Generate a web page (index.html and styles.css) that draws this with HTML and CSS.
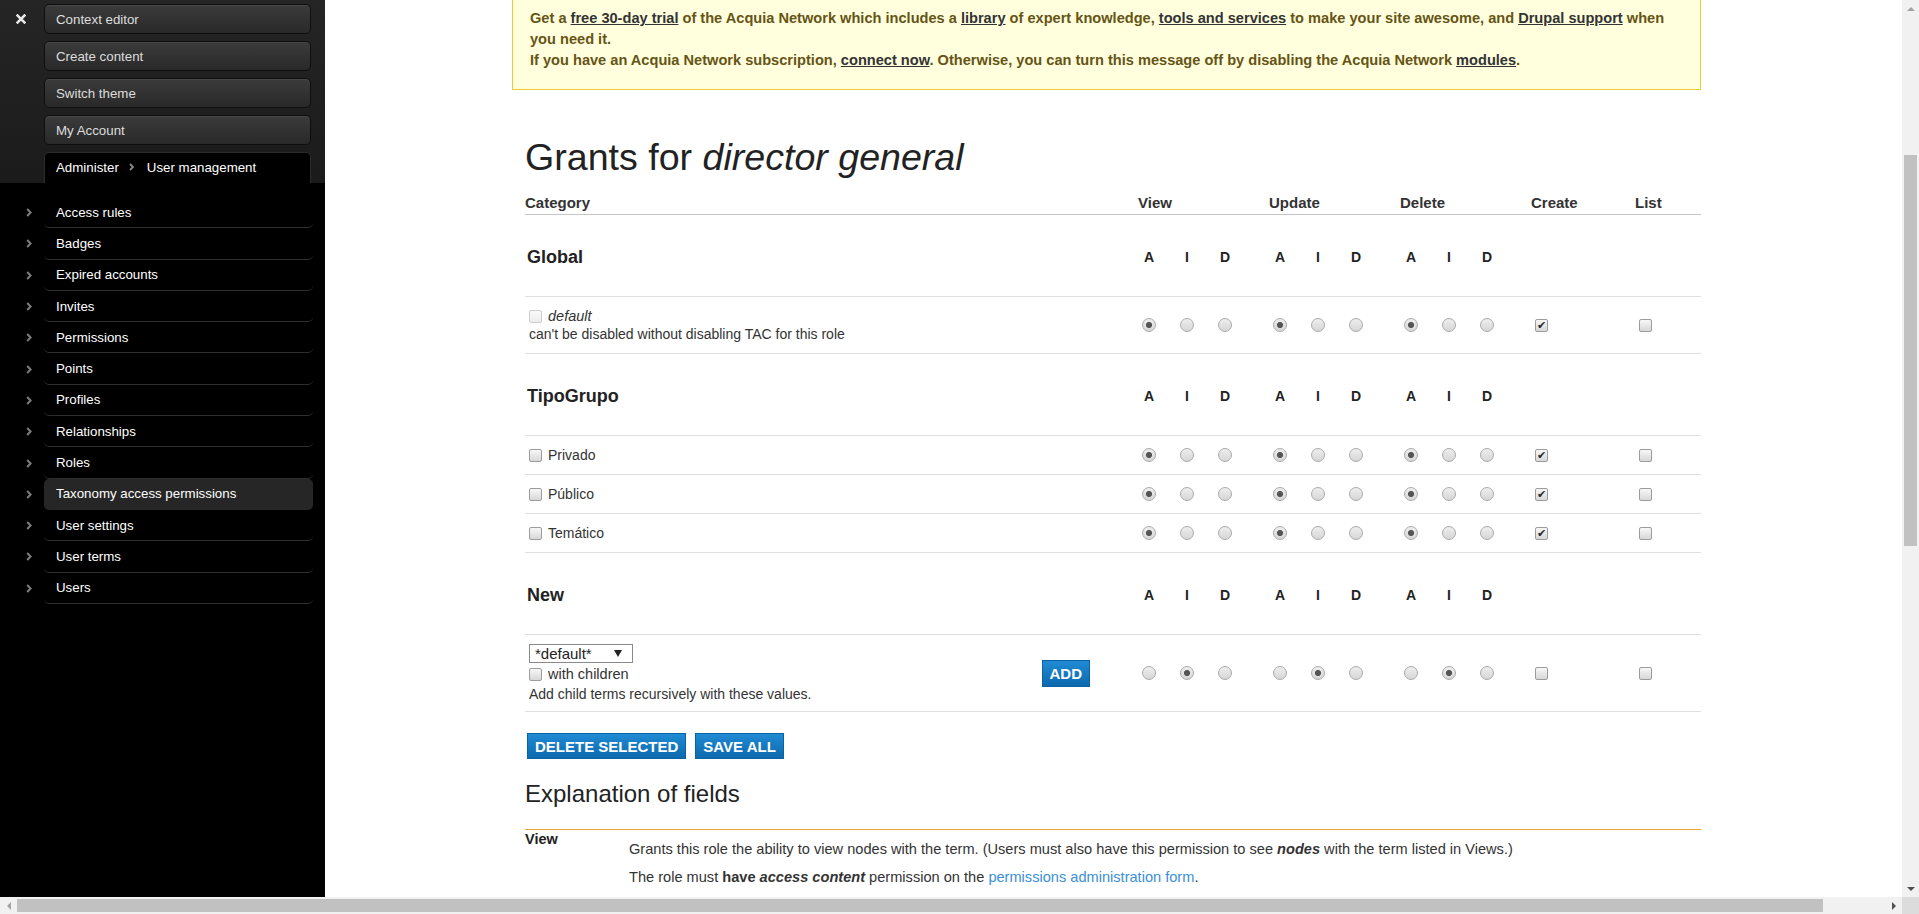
FILE: index.html
```html
<!DOCTYPE html>
<html lang="en">
<head>
<meta charset="utf-8">
<title>Grants for director general</title>
<link rel="stylesheet" href="styles.css">
</head>
<body>
<div class="app">
  <div class="viewport">
    <aside class="sidebar">
      <div class="sb-top">
        <div class="sb-close"><svg width="10" height="10" viewBox="0 0 10 10"><path d="M1.6 1.6 L8.4 8.4 M8.4 1.6 L1.6 8.4" stroke="#e8e8e8" stroke-width="2.6" stroke-linecap="square" fill="none"/></svg></div>
        <nav class="sb-buttons">
          <a class="sb-btn" href="#">Context editor</a>
          <a class="sb-btn" href="#">Create content</a>
          <a class="sb-btn" href="#">Switch theme</a>
          <a class="sb-btn" href="#">My Account</a>
          <div class="sb-tab"><span>Administer</span><svg class="crumb" width="5" height="8" viewBox="0 0 5 8"><path d="M1 1 L4 4 L1 7" fill="none" stroke="#8a8a8a" stroke-width="1.8"/></svg><span>User management</span></div>
        </nav>
      </div>
      <ul class="menu">
        <li><span class="chev"><svg width="6" height="9" viewBox="0 0 6 9"><path d="M1.2 1 L4.6 4.5 L1.2 8" fill="none" stroke="#7c7c7c" stroke-width="2"/></svg></span><a href="#">Access rules</a></li>
        <li><span class="chev"><svg width="6" height="9" viewBox="0 0 6 9"><path d="M1.2 1 L4.6 4.5 L1.2 8" fill="none" stroke="#7c7c7c" stroke-width="2"/></svg></span><a href="#">Badges</a></li>
        <li><span class="chev"><svg width="6" height="9" viewBox="0 0 6 9"><path d="M1.2 1 L4.6 4.5 L1.2 8" fill="none" stroke="#7c7c7c" stroke-width="2"/></svg></span><a href="#">Expired accounts</a></li>
        <li><span class="chev"><svg width="6" height="9" viewBox="0 0 6 9"><path d="M1.2 1 L4.6 4.5 L1.2 8" fill="none" stroke="#7c7c7c" stroke-width="2"/></svg></span><a href="#">Invites</a></li>
        <li><span class="chev"><svg width="6" height="9" viewBox="0 0 6 9"><path d="M1.2 1 L4.6 4.5 L1.2 8" fill="none" stroke="#7c7c7c" stroke-width="2"/></svg></span><a href="#">Permissions</a></li>
        <li><span class="chev"><svg width="6" height="9" viewBox="0 0 6 9"><path d="M1.2 1 L4.6 4.5 L1.2 8" fill="none" stroke="#7c7c7c" stroke-width="2"/></svg></span><a href="#">Points</a></li>
        <li><span class="chev"><svg width="6" height="9" viewBox="0 0 6 9"><path d="M1.2 1 L4.6 4.5 L1.2 8" fill="none" stroke="#7c7c7c" stroke-width="2"/></svg></span><a href="#">Profiles</a></li>
        <li><span class="chev"><svg width="6" height="9" viewBox="0 0 6 9"><path d="M1.2 1 L4.6 4.5 L1.2 8" fill="none" stroke="#7c7c7c" stroke-width="2"/></svg></span><a href="#">Relationships</a></li>
        <li><span class="chev"><svg width="6" height="9" viewBox="0 0 6 9"><path d="M1.2 1 L4.6 4.5 L1.2 8" fill="none" stroke="#7c7c7c" stroke-width="2"/></svg></span><a href="#">Roles</a></li>
        <li><span class="chev"><svg width="6" height="9" viewBox="0 0 6 9"><path d="M1.2 1 L4.6 4.5 L1.2 8" fill="none" stroke="#7c7c7c" stroke-width="2"/></svg></span><a href="#" class="active">Taxonomy access permissions</a></li>
        <li><span class="chev"><svg width="6" height="9" viewBox="0 0 6 9"><path d="M1.2 1 L4.6 4.5 L1.2 8" fill="none" stroke="#7c7c7c" stroke-width="2"/></svg></span><a href="#">User settings</a></li>
        <li><span class="chev"><svg width="6" height="9" viewBox="0 0 6 9"><path d="M1.2 1 L4.6 4.5 L1.2 8" fill="none" stroke="#7c7c7c" stroke-width="2"/></svg></span><a href="#">User terms</a></li>
        <li><span class="chev"><svg width="6" height="9" viewBox="0 0 6 9"><path d="M1.2 1 L4.6 4.5 L1.2 8" fill="none" stroke="#7c7c7c" stroke-width="2"/></svg></span><a href="#">Users</a></li>
      </ul>
    </aside>

    <main class="main">
      <div class="page">
        <div class="messages">Get a <a href="#">free 30-day trial</a> of the Acquia Network which includes a <a href="#">library</a> of expert knowledge, <a href="#">tools and services</a> to make your site awesome, and <a href="#">Drupal support</a> when<br>you need it.<br>If you have an Acquia Network subscription, <a href="#">connect now</a>. Otherwise, you can turn this message off by disabling the Acquia Network <a href="#">modules</a>.</div>

        <div class="content">
          <h1>Grants for <em>director general</em></h1>

          <div class="grants">
            <div class="row hdr">
              <div>Category</div>
              <div class="span3">View</div>
              <div class="span3">Update</div>
              <div class="span3">Delete</div>
              <div>Create</div>
              <div>List</div>
            </div>

            <div class="row group">
              <div class="gname">Global</div>
              <div class="c"><span class="ltr">A</span></div><div class="c"><span class="ltr">I</span></div><div class="c"><span class="ltr">D</span></div>
              <div class="c"><span class="ltr">A</span></div><div class="c"><span class="ltr">I</span></div><div class="c"><span class="ltr">D</span></div>
              <div class="c"><span class="ltr">A</span></div><div class="c"><span class="ltr">I</span></div><div class="c"><span class="ltr">D</span></div>
              <div></div><div></div>
            </div>

            <div class="row t-default">
              <div class="stack">
                <div class="line"><span class="cb off-dis"></span><em>default</em></div>
                <div class="desc">can't be disabled without disabling TAC for this role</div>
              </div>
              <div class="c"><span class="rd on"></span></div><div class="c"><span class="rd"></span></div><div class="c"><span class="rd"></span></div>
              <div class="c"><span class="rd on"></span></div><div class="c"><span class="rd"></span></div><div class="c"><span class="rd"></span></div>
              <div class="c"><span class="rd on"></span></div><div class="c"><span class="rd"></span></div><div class="c"><span class="rd"></span></div>
              <div class="c"><span class="cb">✔</span></div><div class="c"><span class="cb"></span></div>
            </div>

            <div class="row group">
              <div class="gname">TipoGrupo</div>
              <div class="c"><span class="ltr">A</span></div><div class="c"><span class="ltr">I</span></div><div class="c"><span class="ltr">D</span></div>
              <div class="c"><span class="ltr">A</span></div><div class="c"><span class="ltr">I</span></div><div class="c"><span class="ltr">D</span></div>
              <div class="c"><span class="ltr">A</span></div><div class="c"><span class="ltr">I</span></div><div class="c"><span class="ltr">D</span></div>
              <div></div><div></div>
            </div>

            <div class="row t">
              <div class="term"><span class="cb"></span>Privado</div>
              <div class="c"><span class="rd on"></span></div><div class="c"><span class="rd"></span></div><div class="c"><span class="rd"></span></div>
              <div class="c"><span class="rd on"></span></div><div class="c"><span class="rd"></span></div><div class="c"><span class="rd"></span></div>
              <div class="c"><span class="rd on"></span></div><div class="c"><span class="rd"></span></div><div class="c"><span class="rd"></span></div>
              <div class="c"><span class="cb">✔</span></div><div class="c"><span class="cb"></span></div>
            </div>

            <div class="row t">
              <div class="term"><span class="cb"></span>Público</div>
              <div class="c"><span class="rd on"></span></div><div class="c"><span class="rd"></span></div><div class="c"><span class="rd"></span></div>
              <div class="c"><span class="rd on"></span></div><div class="c"><span class="rd"></span></div><div class="c"><span class="rd"></span></div>
              <div class="c"><span class="rd on"></span></div><div class="c"><span class="rd"></span></div><div class="c"><span class="rd"></span></div>
              <div class="c"><span class="cb">✔</span></div><div class="c"><span class="cb"></span></div>
            </div>

            <div class="row t">
              <div class="term"><span class="cb"></span>Temático</div>
              <div class="c"><span class="rd on"></span></div><div class="c"><span class="rd"></span></div><div class="c"><span class="rd"></span></div>
              <div class="c"><span class="rd on"></span></div><div class="c"><span class="rd"></span></div><div class="c"><span class="rd"></span></div>
              <div class="c"><span class="rd on"></span></div><div class="c"><span class="rd"></span></div><div class="c"><span class="rd"></span></div>
              <div class="c"><span class="cb">✔</span></div><div class="c"><span class="cb"></span></div>
            </div>

            <div class="row group">
              <div class="gname">New</div>
              <div class="c"><span class="ltr">A</span></div><div class="c"><span class="ltr">I</span></div><div class="c"><span class="ltr">D</span></div>
              <div class="c"><span class="ltr">A</span></div><div class="c"><span class="ltr">I</span></div><div class="c"><span class="ltr">D</span></div>
              <div class="c"><span class="ltr">A</span></div><div class="c"><span class="ltr">I</span></div><div class="c"><span class="ltr">D</span></div>
              <div></div><div></div>
            </div>

            <div class="row t-new">
              <div class="newcell">
                <div class="stack">
                  <div class="select"><span>*default*</span><span class="sel-arrow"></span></div>
                  <div class="line wc"><span class="cb"></span>with children</div>
                  <div class="desc">Add child terms recursively with these values.</div>
                </div>
                <button class="btn add" type="button">ADD</button>
              </div>
              <div class="c"><span class="rd"></span></div><div class="c"><span class="rd on"></span></div><div class="c"><span class="rd"></span></div>
              <div class="c"><span class="rd"></span></div><div class="c"><span class="rd on"></span></div><div class="c"><span class="rd"></span></div>
              <div class="c"><span class="rd"></span></div><div class="c"><span class="rd on"></span></div><div class="c"><span class="rd"></span></div>
              <div class="c"><span class="cb"></span></div><div class="c"><span class="cb"></span></div>
            </div>
          </div>

          <div class="actions">
            <button class="btn" type="button">DELETE SELECTED</button>
            <button class="btn" type="button">SAVE ALL</button>
          </div>

          <h2>Explanation of fields</h2>
          <dl class="explain">
            <dt>View</dt>
            <dd>
              <p>Grants this role the ability to view nodes with the term. (Users must also have this permission to see <strong><em>nodes</em></strong> with the term listed in Views.)</p>
              <p>The role must <strong>have <em>access content</em></strong> permission on the <a href="#">permissions administration form</a>.</p>
            </dd>
          </dl>
        </div>
      </div>
    </main>
  </div>

  <div class="vscroll">
    <div class="arr"><span class="tri-up"></span></div>
    <div class="vthumb"></div>
    <div class="arr down"><span class="tri-down"></span></div>
  </div>
  <div class="hscroll">
    <div class="arr"><span class="tri-left"></span></div>
    <div class="hthumb"></div>
    <div class="arr right"><span class="tri-right"></span></div>
  </div>
  <div class="corner"></div>
</div>
</body>
</html>
```

FILE: styles.css
```css
* { box-sizing: border-box; }
html, body { margin: 0; height: 100%; }
body {
  font-family: "Liberation Sans", Arial, Helvetica, sans-serif;
  color: #333;
  background: #fff;
  overflow: hidden;
}

.app {
  display: grid;
  grid-template-columns: 1fr 17px;
  grid-template-rows: 1fr 17px;
  height: 100vh;
}
.viewport { display: flex; overflow: hidden; min-height: 0; min-width: 0; }

/* ---------- sidebar ---------- */
.sidebar {
  flex: none;
  width: 325px;
  background: #000;
  color: #fff;
  font-size: 13.3px;
}
.sb-top {
  display: flex;
  height: 183px;
  background: linear-gradient(#252525, #1b1b1b);
}
.sb-close { width: 44px; padding: 14px 0 0 16px; }
.sb-close svg { display: block; }
.sb-buttons {
  width: 267px;
  display: flex;
  flex-direction: column;
  gap: 7px;
  padding-top: 4px;
}
.sb-btn {
  height: 30px;
  display: flex;
  align-items: center;
  padding-left: 11px;
  color: #ddd;
  text-decoration: none;
  border: 1px solid #0e0e0e;
  border-radius: 5px;
  background: linear-gradient(#3b3b3b, #292929);
  box-shadow: inset 0 1px 0 rgba(255, 255, 255, .07);
}
.sb-tab {
  flex: 1;
  display: flex;
  align-items: center;
  gap: 10px;
  padding: 0 0 2px 11px;
  color: #fff;
  background: #000;
  border: 1px solid #2b2b2b;
  border-bottom: 0;
  border-radius: 5px 5px 0 0;
}
.sb-tab .crumb { margin-right: 3px; }
.menu { list-style: none; margin: 0; padding: 14px 0 0; }
.menu li { display: flex; align-items: center; }
.chev { width: 44px; padding-left: 26px; display: flex; }
.menu a {
  width: 269px;
  height: 31.3px;
  display: flex;
  align-items: center;
  padding-left: 12px;
  color: #fff;
  text-decoration: none;
  border-bottom: 1px solid #2e2e2e;
  border-radius: 5px;
}
.menu a.active { background: #262626; border-bottom-color: #262626; }

/* ---------- main ---------- */
.main { flex: 1; min-width: 0; padding-left: 187px; }
.page { width: 1189px; }
.messages {
  background: #ffffdd;
  border: 1px solid #e8d032;
  border-top: 0;
  padding: 8px 8px 18px 17px;
  color: #665417;
  font-weight: bold;
  font-size: 14.6px;
  line-height: 21px;
  white-space: nowrap;
}
.messages a { color: #333; text-decoration: underline; }
.content { padding-left: 13px; }
h1 {
  margin: 45px 0 11px;
  font-size: 37.6px;
  line-height: 44px;
  font-weight: normal;
  color: #222;
}

.row {
  display: grid;
  grid-template-columns: 613px 38px 38px 55px 38px 38px 55px 38px 38px 55px 104px 66px;
  align-items: center;
  border-bottom: 1px solid #e0e0e0;
}
.hdr { height: 25px; padding-top: 1px; border-bottom-color: #c6c6c6; font-weight: bold; font-size: 15px; }
.span3 { grid-column: span 3; }
.group { height: 82px; padding-top: 3px; }
.gname { font-size: 18px; font-weight: bold; padding-left: 2px; color: #222; }
.c { padding-left: 4px; display: flex; align-items: center; }
.ltr { width: 14px; text-align: center; font-weight: bold; font-size: 14px; color: #222; }
.t-default { height: 57px; }
.t { height: 39px; }
.t-new { height: 77px; }

.term { display: flex; align-items: center; padding-left: 4px; font-size: 14px; }
.term .cb, .line .cb { margin-right: 6px; }
.stack { padding-left: 4px; font-size: 14px; }
.line { display: flex; align-items: center; line-height: 18px; }
.line em { font-size: 14.5px; }
.desc { font-size: 14px; line-height: 18px; }
.wc { line-height: 21px; font-size: 14.5px; padding-top: 1px; }
.newcell { display: flex; align-items: center; padding-right: 48px; }
.newcell .stack { padding-left: 4px; }
.newcell .add { margin-left: auto; height: 27px; }
.select {
  width: 104px;
  height: 19px;
  display: flex;
  align-items: center;
  justify-content: space-between;
  padding: 0 10px 0 5px;
  border: 1px solid #8a8a8a;
  background: #fff;
  font-size: 15px;
  color: #222;
}
.sel-arrow {
  width: 0; height: 0;
  border-left: 4px solid transparent;
  border-right: 4px solid transparent;
  border-top: 7px solid #222;
}

.rd {
  display: inline-block;
  width: 14px;
  height: 14px;
  border-radius: 50%;
  border: 1px solid #ababab;
  background: linear-gradient(#eeeeee, #d6d6d6);
}
.rd.on {
  background: radial-gradient(circle at center, #555 0, #555 2.7px, rgba(85,85,85,0) 3.4px), linear-gradient(#eeeeee, #d6d6d6);
}
.cb {
  display: inline-block;
  flex: none;
  width: 13px;
  height: 13px;
  border: 1px solid #9c9c9c;
  border-radius: 2px;
  background: linear-gradient(#f7f7f7, #d8d8d8);
  font-family: "DejaVu Sans", sans-serif;
  font-size: 11px;
  font-weight: bold;
  line-height: 11px;
  text-align: center;
  color: #2a2a2a;
  overflow: hidden;
}
.cb.off-dis { border-color: #cdcdcd; background: linear-gradient(#fafafa, #ececec); }

.btn {
  font-family: "Liberation Sans", Arial, sans-serif;
  font-weight: bold;
  font-size: 15px;
  color: #fff;
  background: linear-gradient(#1f8bd4, #0d69ad);
  border: 1px solid #0b62a2;
  height: 26px;
  padding: 0 7px;
  border-radius: 0;
}
.actions { display: flex; gap: 9px; margin: 21px 0 0 2px; }
h2 {
  font-size: 24px;
  font-weight: normal;
  line-height: 30px;
  margin: 20px 0;
  color: #222;
}
.explain {
  display: grid;
  grid-template-columns: 104px 1fr;
  border-top: 1px solid #eaa53a;
  margin: 0;
}
.explain dt { font-weight: bold; font-size: 14.5px; padding-top: 2px; line-height: 15px; color: #222; }
.explain dd { margin: 0; padding-top: 10px; font-size: 14.6px; line-height: 18px; }
.explain p { margin: 0 0 10px; }
.explain a { color: #3b8fd6; text-decoration: none; }

/* ---------- scrollbars ---------- */
.vscroll { background: #f1f1f1; display: flex; flex-direction: column; align-items: center; }
.hscroll { background: #f1f1f1; display: flex; align-items: center; }
.arr { width: 17px; height: 17px; flex: none; display: flex; align-items: center; justify-content: center; }
.vthumb { width: 13px; height: 391px; margin-top: 138px; background: #c1c1c1; }
.vscroll .down { margin-top: auto; }
.hthumb { height: 13px; width: 1806px; background: #c1c1c1; }
.hscroll .right { margin-left: auto; }
.corner { background: #dcdcdc; }
.tri-up { width: 0; height: 0; border-left: 4px solid transparent; border-right: 4px solid transparent; border-bottom: 4px solid #a3a3a3; }
.tri-down { width: 0; height: 0; border-left: 4px solid transparent; border-right: 4px solid transparent; border-top: 4px solid #505050; }
.tri-left { width: 0; height: 0; border-top: 4px solid transparent; border-bottom: 4px solid transparent; border-right: 4px solid #a3a3a3; }
.tri-right { width: 0; height: 0; border-top: 4px solid transparent; border-bottom: 4px solid transparent; border-left: 4px solid #505050; }
```
